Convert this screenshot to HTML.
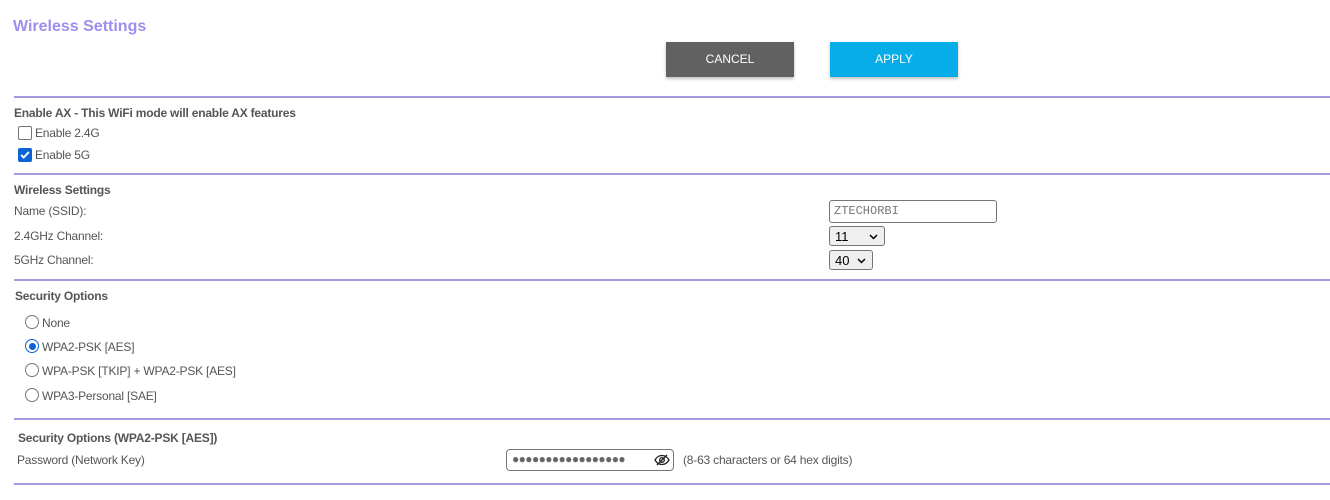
<!DOCTYPE html>
<html><head><style>
body{margin:0;width:1330px;height:500px;background:#fff;font-family:"Liberation Sans",Arial,sans-serif;font-size:12px;color:#555;position:relative;overflow:hidden}
.a{position:absolute;white-space:nowrap}
.t{letter-spacing:-0.2px}
.hr{position:absolute;left:14px;width:1316px;height:2px;background:#a19be0}
.b{font-weight:bold}
.btn{position:absolute;top:42px;width:128px;height:35px;color:#fff;text-align:center;line-height:35px;font-size:12px;box-shadow:0 2px 3px rgba(0,0,0,.25)}
.cb{position:absolute;width:12px;height:12px;border:1px solid #767676;border-radius:2px;background:#fff}
.rd{position:absolute;width:12px;height:12px;border:1px solid #767676;border-radius:50%;background:#fff}
.sel{position:absolute;height:20px;border:1px solid #767676;border-radius:3px;background:#efefef;color:#000;font-size:13px;line-height:20px;padding-left:5px;box-sizing:border-box}
.sel svg{position:absolute;right:6px;top:7px}
</style></head><body>
<div class="a b" style="left:13px;top:18px;font-size:16px;color:#9d8fee">Wireless Settings</div>
<div class="btn" style="left:666px;background:#616161">CANCEL</div>
<div class="btn" style="left:830px;background:#06ade8">APPLY</div>

<div class="hr" style="top:96px"></div>
<div class="a b t" style="left:14px;top:106px">Enable AX - This WiFi mode will enable AX features</div>
<div class="cb" style="left:18px;top:126px"></div>
<div class="a t" style="left:35px;top:126px">Enable 2.4G</div>
<div class="cb" style="left:18px;top:148px;background:#0b63d6;border-color:#0b63d6"><svg width="12" height="12" viewBox="0 0 11 11" style="position:absolute;left:0;top:0"><path d="M2 5.5l2.3 2.3L9 2.8" stroke="#fff" stroke-width="1.8" fill="none"/></svg></div>
<div class="a t" style="left:35px;top:148px">Enable 5G</div>

<div class="hr" style="top:173px"></div>
<div class="a b t" style="left:14px;top:183px">Wireless Settings</div>
<div class="a t" style="left:14px;top:204px">Name (SSID):</div>
<div class="a t" style="left:14px;top:229px">2.4GHz Channel:</div>
<div class="a t" style="left:14px;top:253px">5GHz Channel:</div>
<div class="a" style="left:829px;top:200px;width:168px;height:23px;border:1px solid #767676;border-radius:3px;box-sizing:border-box;font-family:'Liberation Mono',monospace;font-size:12px;color:#777;line-height:21px;padding-left:4px">ZTECHORBI</div>
<div class="sel" style="left:829px;top:226px;width:56px">11<svg width="9" height="6"><path d="M1 1l3.5 3.5L8 1" stroke="#000" stroke-width="1.5" fill="none"/></svg></div>
<div class="sel" style="left:829px;top:250px;width:44px">40<svg width="9" height="6"><path d="M1 1l3.5 3.5L8 1" stroke="#000" stroke-width="1.5" fill="none"/></svg></div>

<div class="hr" style="top:279px"></div>
<div class="a b t" style="left:15px;top:289px">Security Options</div>
<div class="rd" style="left:25px;top:315px"></div>
<div class="a t" style="left:42px;top:316px">None</div>
<div class="rd" style="left:25px;top:339px;border-color:#0b63d6"><div style="position:absolute;left:2.5px;top:2.5px;width:7px;height:7px;border-radius:50%;background:#0b63d6"></div></div>
<div class="a t" style="left:42px;top:340px">WPA2-PSK [AES]</div>
<div class="rd" style="left:25px;top:363px"></div>
<div class="a t" style="left:42px;top:364px">WPA-PSK [TKIP] + WPA2-PSK [AES]</div>
<div class="rd" style="left:25px;top:388px"></div>
<div class="a t" style="left:42px;top:389px">WPA3-Personal [SAE]</div>

<div class="hr" style="top:418px"></div>
<div class="a b t" style="left:18px;top:431px">Security Options (WPA2-PSK [AES])</div>
<div class="a t" style="left:17px;top:453px">Password (Network Key)</div>
<div class="a" style="left:506px;top:449px;width:168px;height:22px;border:1px solid #767676;border-radius:4px;box-sizing:border-box">
<div class="a" style="left:5px;top:2px;font-size:12px;color:#666;letter-spacing:-0.6px">●●●●●●●●●●●●●●●●●</div>
<svg width="16" height="12" viewBox="0 0 16 12" style="position:absolute;left:147px;top:4px"><path d="M1 6C3 2.5 5.5 1.5 8 1.5S13 2.5 15 6C13 9.5 10.5 10.5 8 10.5S3 9.5 1 6Z" stroke="#222" stroke-width="1.3" fill="none"/><circle cx="8" cy="6" r="2.3" stroke="#222" stroke-width="1.3" fill="none"/><path d="M3 11L13 1" stroke="#222" stroke-width="1.3"/></svg>
</div>
<div class="a t" style="left:683px;top:453px">(8-63 characters or 64 hex digits)</div>
<div class="hr" style="top:483px"></div>
</body></html>
